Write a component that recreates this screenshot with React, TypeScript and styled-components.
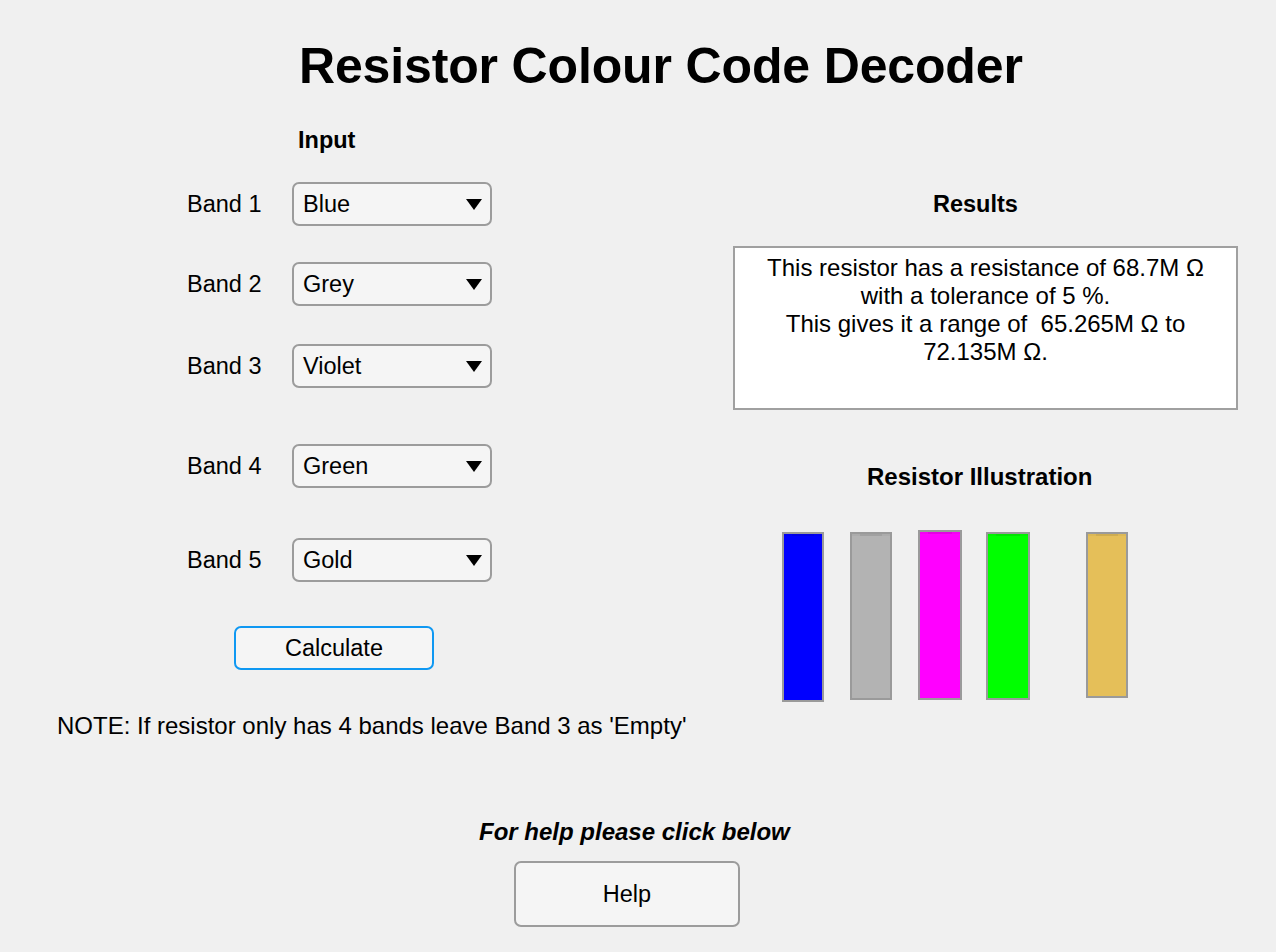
import React from "react";
import styled, { createGlobalStyle } from "styled-components";

const GlobalStyle = createGlobalStyle`
  html, body {
    margin: 0;
    padding: 0;
    background: #f0f0f0;
  }
  body {
    font-family: "Liberation Sans", Arial, Helvetica, sans-serif;
    color: #000;
  }
`;

const Page = styled.div`
  width: 1276px;
  height: 952px;
  background: #f0f0f0;
  display: flex;
  flex-direction: column;
  overflow: hidden;
`;

const TitleBar = styled.header`
  height: 110px;
  padding-left: 299px;
  box-sizing: border-box;
  padding-top: 41px;
`;

const Title = styled.h1`
  margin: 0;
  font-size: 50px;
  line-height: 50px;
  font-weight: 700;
  letter-spacing: -0.15px;
  white-space: nowrap;
`;

const Main = styled.main`
  display: grid;
  grid-template-columns: 700px 576px;
  align-items: start;
`;

const Column = styled.section`
  display: flex;
  flex-direction: column;
  align-items: flex-start;
`;

const Heading = styled.h2<{ $left: number; $top: number; $size?: number }>`
  margin: ${(p) => p.$top}px 0 0 ${(p) => p.$left}px;
  font-size: ${(p) => p.$size ?? 23.5}px;
  line-height: 23px;
  font-weight: 700;
  white-space: nowrap;
`;

const BandRow = styled.div<{ $top: number }>`
  display: flex;
  align-items: center;
  margin-top: ${(p) => p.$top}px;
  padding-left: 187px;
`;

const BandLabel = styled.label`
  width: 105px;
  font-size: 23.5px;
  line-height: 23px;
  white-space: nowrap;
`;

const Dropdown = styled.div`
  box-sizing: border-box;
  width: 200px;
  height: 44px;
  border: 2px solid #9c9c9c;
  border-radius: 7px;
  background: #f5f5f5;
  display: flex;
  align-items: center;
  justify-content: space-between;
  padding: 0 8px 0 9px;
  font-size: 23.5px;
`;

const DropValue = styled.span`
  line-height: 23px;
`;

const Arrow = styled.svg`
  width: 16px;
  height: 11px;
  display: block;
`;

const PushButton = styled.button<{ $w: number; $h: number; $left: number; $top: number; $focus?: boolean }>`
  box-sizing: border-box;
  width: ${(p) => p.$w}px;
  height: ${(p) => p.$h}px;
  margin: ${(p) => p.$top}px 0 0 ${(p) => p.$left}px;
  border: 2px solid ${(p) => (p.$focus ? "#0f98f2" : "#9c9c9c")};
  border-radius: 7px;
  background: #f5f5f5;
  font-family: "Liberation Sans", Arial, sans-serif;
  font-size: 23.5px;
  color: #000;
  padding: 0;
  cursor: pointer;
`;

const Note = styled.p`
  margin: 44px 0 0 57px;
  font-size: 24px;
  line-height: 23px;
  white-space: nowrap;
`;

const ResultsBox = styled.div`
  box-sizing: border-box;
  width: 505px;
  height: 164px;
  margin: 30px 0 0 33px;
  border: 2px solid #a0a0a0;
  background: #fff;
  padding-top: 6px;
  text-align: center;
  font-size: 24px;
  line-height: 28px;
`;

const Bars = styled.div`
  display: flex;
  align-items: flex-start;
  margin: 42px 0 0 82px;
`;

const Bar = styled.div<{ $color: string; $w: number; $h: number; $gap: number; $dy: number }>`
  position: relative;
  box-sizing: border-box;
  flex: none;
  width: ${(p) => p.$w}px;
  height: ${(p) => p.$h}px;
  margin-left: ${(p) => p.$gap}px;
  margin-top: ${(p) => p.$dy}px;
  background: ${(p) => p.$color};
  border: 2px solid #9a9a9a;
  &::before {
    content: "";
    position: absolute;
    top: 0;
    left: 0;
    right: 0;
    height: 2px;
    background: linear-gradient(
      to right,
      rgba(0, 0, 0, 0.04) 0,
      rgba(0, 0, 0, 0.04) 20%,
      rgba(0, 0, 0, 0.1) 20%,
      rgba(0, 0, 0, 0.1) 80%,
      rgba(0, 0, 0, 0.04) 80%
    );
  }
`;

const Footer = styled.footer`
  display: flex;
  flex-direction: column;
  align-items: flex-start;
`;

const HelpHint = styled.p`
  margin: 83px 0 0 479px;
  font-size: 24px;
  line-height: 23px;
  font-weight: 700;
  font-style: italic;
  white-space: nowrap;
`;

const bands = [
  { label: "Band 1", value: "Blue", top: 30 },
  { label: "Band 2", value: "Grey", top: 36 },
  { label: "Band 3", value: "Violet", top: 38 },
  { label: "Band 4", value: "Green", top: 56 },
  { label: "Band 5", value: "Gold", top: 50 },
];

const bars = [
  { color: "#0000ff", w: 42, h: 170, gap: 0, dy: 2 },
  { color: "#b3b3b3", w: 42, h: 168, gap: 26, dy: 2 },
  { color: "#ff00ff", w: 44, h: 170, gap: 26, dy: 0 },
  { color: "#00ff00", w: 44, h: 168, gap: 24, dy: 2 },
  { color: "#e5bf59", w: 42, h: 166, gap: 56, dy: 2 },
];

export default function App() {
  return (
    <>
      <GlobalStyle />
      <Page>
        <TitleBar>
          <Title>Resistor Colour Code Decoder</Title>
        </TitleBar>
        <Main>
          <Column>
            <Heading $left={298} $top={19}>Input</Heading>
            {bands.map((b) => (
              <BandRow key={b.label} $top={b.top}>
                <BandLabel>{b.label}</BandLabel>
                <Dropdown>
                  <DropValue>{b.value}</DropValue>
                  <Arrow viewBox="0 0 16 11">
                    <polygon points="0,0 16,0 8,11" fill="#000" />
                  </Arrow>
                </Dropdown>
              </BandRow>
            ))}
            <PushButton $w={200} $h={44} $left={234} $top={44} $focus>
              Calculate
            </PushButton>
            <Note>NOTE: If resistor only has 4 bands leave Band 3 as 'Empty'</Note>
          </Column>
          <Column>
            <Heading $left={233} $top={83}>Results</Heading>
            <ResultsBox>
              This resistor has a resistance of 68.7M Ω
              <br />
              with a tolerance of 5 %.
              <br />
              This gives it a range of&nbsp; 65.265M Ω to
              <br />
              72.135M Ω.
            </ResultsBox>
            <Heading $left={167} $top={55} $size={24}>
              Resistor Illustration
            </Heading>
            <Bars>
              {bars.map((b, i) => (
                <Bar key={i} $color={b.color} $w={b.w} $h={b.h} $gap={b.gap} $dy={b.dy} />
              ))}
            </Bars>
          </Column>
        </Main>
        <Footer>
          <HelpHint>For help please click below</HelpHint>
          <PushButton $w={226} $h={66} $left={514} $top={18}>
            Help
          </PushButton>
        </Footer>
      </Page>
    </>
  );
}
